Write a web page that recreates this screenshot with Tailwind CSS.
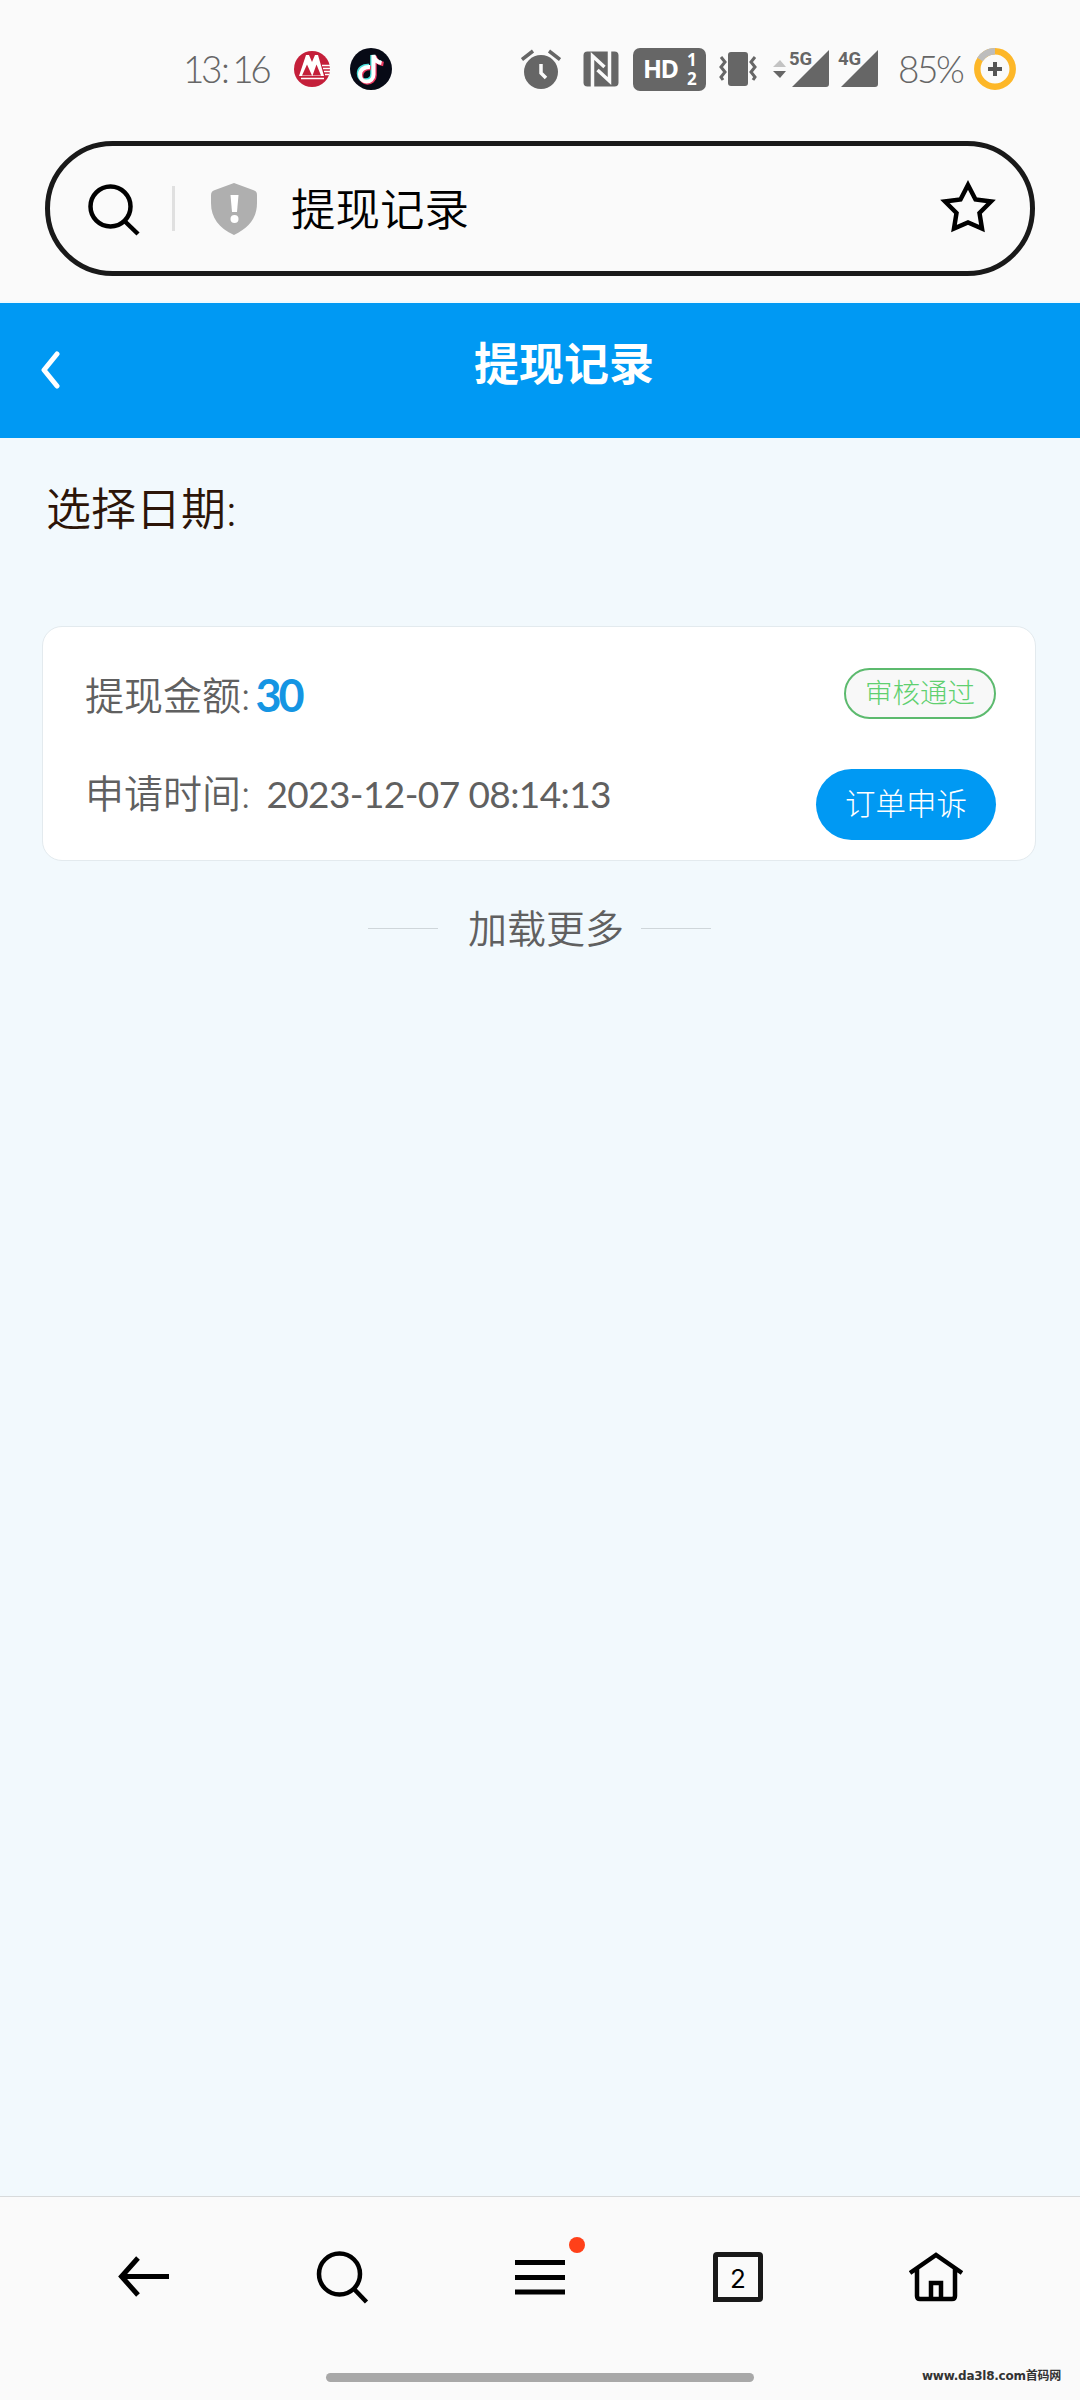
<!DOCTYPE html>
<html lang="zh-CN">
  <head>
    <meta charset="UTF-8" />
    <meta name="viewport" content="width=device-width, initial-scale=1.0" />
    <title>提现记录</title>
    <!-- Tailwind CSS CDN -->
    <script src="https://cdn.jsdelivr.net/npm/@tailwindcss/browser@4"></script>
    <style>
      body { font-family: Lato, 'Noto Sans CJK SC', sans-serif; }
    </style>
  </head>
  <body class="bg-[#f2f9fd] w-[1080px] h-[2400px] flex flex-col overflow-hidden whitespace-nowrap">
    <!-- Status bar -->
    <div class="h-[141px] shrink-0 bg-[#fafafa] flex justify-between pl-[183px] pr-[64px] pt-[44px] text-[#666]">
      <div class="flex items-center h-[50px]">
        <span class="w-[111px] text-[37px] font-light leading-[50px] tracking-[-3.5px]">13<span class="ml-[2px] mr-[6px]">:</span>16</span>
        <svg class="w-9 h-9 mr-5" viewBox="0 0 36 36">
          <circle cx="18" cy="18" r="18" fill="#c41f3a" />
          <path d="M5 25L12 4h3l3 7 3-7h3l6 21z" fill="#fff" />
          <path d="M8 24.500l5-11 5 11zM18.500 24.500l4-11 4.500 11z" fill="#c41f3a" />
          <path d="M7 27.500h23M28 14.500h8M29 17.500h7M30 20.500h6M31 23.500h4" stroke="#fff" stroke-width="1.500" />
        </svg>
        <svg class="w-[42px] h-[42px]" viewBox="0 0 42 42">
          <circle cx="21" cy="21" r="21" fill="#070a16" />
          <g fill="none" stroke-width="4.500">
            <path d="M19 18c-6-.5-10 3-10 7.500s3 7 6.500 7 7-2.500 7-7V7c.5 4 3.500 7 8.500 7.500" stroke="#48e0dc" />
            <path d="M21 20c-6-.5-10 3-10 7.500s3 7 6.500 7 7-2.500 7-7V8c.5 4 3.500 7 9 8" stroke="#ed3a62" />
            <path d="M20 19c-6-.5-10 3-10 7.500s3 7 6.500 7 7-2.500 7-7V7c.5 4 3.500 7 8 8" stroke="#fff" stroke-width="4" />
          </g>
        </svg>
      </div>
      <div class="flex items-center h-[50px]">
        <!-- Alarm -->
        <svg class="w-10 h-10 mr-[22px]" viewBox="0 0 40 40">
          <circle cx="20" cy="23" r="17" fill="#666" />
          <path d="M1 10.500L12 2M28 2l11 8.500" stroke="#666" stroke-width="3.500" />
          <path d="M20 15v9l5 5" fill="none" stroke="#fafafa" stroke-width="3.500" />
        </svg>
        <!-- NFC -->
        <svg class="w-9 h-9 mr-[14px]" viewBox="0 0 36 36">
          <rect x=".5" y=".5" width="35" height="35" rx="4" fill="#666" />
          <path d="M9.500 36V5l12 11M26.500 0v30l-12-11" fill="none" stroke="#fafafa" stroke-width="3.500" />
        </svg>
        <!-- HD -->
        <svg class="w-[73px] h-[43px] mr-[13px]" viewBox="0 0 73 43">
          <rect width="73" height="43" rx="7" fill="#666" />
          <g fill="#fff" font-family="Open Sans" font-weight="700">
            <text x="10" y="30" font-size="25" textLength="36">HD</text>
            <text x="54" y="18" font-size="17">1</text>
            <text x="54" y="37" font-size="17">2</text>
          </g>
        </svg>
        <!-- Vibrate -->
        <svg class="w-[38px] h-9 mr-[15px]" viewBox="0 0 38 36">
          <rect x="9" y="1" width="20" height="34" rx="3" fill="#666" />
          <path d="M2 6l4 5-4 5 4 5-4 5 2 3M36 6l-4 5 4 5-4 5 4 5-2 3" fill="none" stroke="#666" stroke-width="3" />
        </svg>
        <!-- Data arrows and signals -->
        <svg class="w-[108px] h-10 mr-[18px]" viewBox="0 0 108 40">
          <path d="M1 18l7-7 6 7z" fill="#c3c3c3" />
          <path d="M1 22h13l-6 7z" fill="#666" />
          <path d="M20 38L57 1v34q0 3-3 3zM69 38L106 1v34q0 3-3 3z" fill="#666" />
          <g fill="#666" font-family="Roboto" font-weight="700" font-size="18.500">
            <text x="17" y="15.500">5G</text>
            <text x="66" y="15.500">4G</text>
          </g>
        </svg>
        <span class="text-[37px] font-light leading-[50px] w-[76px] tracking-[-2.5px]">85%</span>
        <!-- Battery -->
        <svg class="w-[42px] h-[42px]" viewBox="0 0 42 42">
          <circle cx="21" cy="21" r="17.700" fill="none" stroke="#fdb728" stroke-width="6.500" />
          <path d="M6 11.600A17.700 17.700 0 0 1 21 3.300" fill="none" stroke="#bdbdbd" stroke-width="6.500" />
          <path d="M14 21h14M21 14v14" stroke="#555" stroke-width="4" />
        </svg>
      </div>
    </div>

    <!-- Address bar -->
    <div class="h-[162px] shrink-0 bg-[#fafafa] px-[45px] border-b-2 border-[#eefaff]">
      <div class="h-[135px] rounded-full border-[5px] border-[#191919] flex items-center pl-[38px] pr-[34px]">
        <svg class="w-[52px] h-[54px] mr-[32px]" viewBox="0 0 52 54" fill="none" stroke="#000" stroke-width="4.500">
          <circle cx="22.500" cy="24.500" r="20" />
          <path d="M36.500 39L50 52" />
        </svg>
        <div class="w-[3px] h-[45px] bg-[#e0e0e0] mr-[36px]"></div>
        <svg class="w-[46px] h-[52px] mr-[34px]" viewBox="0 0 46 52">
          <path d="M23 0l19 7q4 1 4 5v8c0 15-8 25-23 32C8 45 0 35 0 20v-8q0-4 4-5z" fill="#afafaf" />
          <path d="M19.500 12h8l-1.500 17h-5z" fill="#fff" />
          <circle cx="23.500" cy="36" r="4" fill="#fff" />
        </svg>
        <span class="text-[44.500px] leading-[60px] text-black font-[350] flex-1">提现记录</span>
        <svg class="w-[56px] h-[54px] mb-1" viewBox="0 0 56 54">
          <path d="M28 5l7.500 14.500 15.500 2-11.500 11.500 2.500 15.500-14-6-14 6 2.500-15.500L5 21.500l15.500-2z" fill="none" stroke="#000" stroke-width="4.500" />
        </svg>
      </div>
    </div>

    <!-- Page header -->
    <header class="h-[135px] shrink-0 bg-[#0099f3] flex items-center pl-[41px] text-white">
      <svg class="w-[19px] h-[38px] mb-[1px]" viewBox="0 0 19 38">
        <path d="M16 3L3 19l13 16" fill="none" stroke="#fff" stroke-width="5" stroke-linecap="round" stroke-linejoin="round" />
      </svg>
      <h1 class="flex-1 text-center text-[45px] leading-[60px] font-bold pr-[12px] mb-[14px]">提现记录</h1>
    </header>

    <main class="flex-1 pl-[42px] pr-[44px] pt-[41px]">
      <div class="h-[60px] pl-[4px] text-[45px] leading-[60px] font-[350] text-[#2c1508]">选择日期:</div>

      <!-- Record card -->
      <div class="mt-[87px] h-[235px] rounded-[20px] bg-white border border-[#e3eaee] flex justify-between pl-[42px] pr-[39px] text-[#606060]">
        <div class="pt-[42px]">
          <div class="flex items-center h-[52px] text-[39px] font-[350]">
            <span>提现金额:</span>
            <span class="ml-[5px] text-[45px] font-bold text-[#1595e3] tracking-[-3px] leading-[50px]">30</span>
          </div>
          <div class="flex items-center h-[52px] mt-[46px] text-[39px] font-[350]">
            <span>申请时间:</span>
            <span class="ml-[16px] pt-[2px] text-[37px] font-normal tracking-[-0.600px]">2023-12-07 08:14:13</span>
          </div>
        </div>
        <div class="flex flex-col items-end">
          <span class="mt-[41px] w-[152px] h-[51px] rounded-full border-2 border-[#5cba6e] bg-[#f8f8f8] text-[#5fd070] text-[27.500px] font-light leading-[45px] text-center">审核通过</span>
          <button class="mt-[50px] w-[180px] h-[71px] rounded-full bg-[#0099f3] text-white text-[30.500px] font-light leading-[62px] pb-1">订单申诉</button>
        </div>
      </div>

      <!-- Load more -->
      <div class="mt-[39px] ml-[326px] h-[56px] flex items-center text-[39px] font-[350] text-[#606060]">
        <span class="w-[70px] h-px bg-[#cfd6da]"></span>
        <span class="w-[203px] pl-[30px]">加载更多</span>
        <span class="w-[70px] h-px bg-[#cfd6da]"></span>
      </div>
    </main>

    <!-- Browser toolbar -->
    <nav class="relative h-[204px] shrink-0 bg-[#fafafa] border-t border-[#d8dadb]">
      <div class="h-[159px] px-[45px] grid grid-cols-5 place-items-center text-black">
        <svg class="w-[52px] h-[52px]" viewBox="0 0 52 52" fill="none" stroke="#000" stroke-width="5">
          <path d="M20 7L3.500 25.500 20 44M4 25.500h47" />
        </svg>
        <svg class="w-[54px] h-[54px]" viewBox="0 0 54 54" fill="none" stroke="#000" stroke-width="4.500">
          <circle cx="24.500" cy="24" r="20.500" />
          <path d="M39 39l12.500 13" />
        </svg>
        <div class="relative">
          <svg class="w-[50px] h-[50px]" viewBox="0 0 50 50" stroke="#000" stroke-width="5">
            <path d="M0 10.500h50M0 25.500h50M0 40h50" />
          </svg>
          <span class="absolute -top-[15px] left-[54px] w-4 h-4 rounded-full bg-[#ff4019]"></span>
        </div>
        <div class="w-[50px] h-[50px] rounded-[4px] rounded-bl-none border-[5px] border-[#191919] flex items-center justify-center font-[Inter] text-[26px] pt-[3px]">2</div>
        <svg class="w-[54px] h-[52px]" viewBox="0 0 54 52" fill="none" stroke="#000" stroke-width="4.500">
          <path d="M1 22L27 4l26 18M8 17v28q0 3 3 3h32q3 0 3-3V17M22 48V32h10v16" />
        </svg>
      </div>
      <div class="absolute left-[326px] top-[176px] w-[428px] h-[9px] rounded-full bg-[#a8a8a8]"></div>
      <div class="absolute left-[922px] top-[169px] h-[20px] leading-[20px] text-[12px] font-bold text-[#333] font-['DejaVu_Sans','Noto_Sans_CJK_SC',sans-serif] tracking-[-0.250px]">www.da3l8.com首码网</div>
    </nav>
  </body>
</html>
